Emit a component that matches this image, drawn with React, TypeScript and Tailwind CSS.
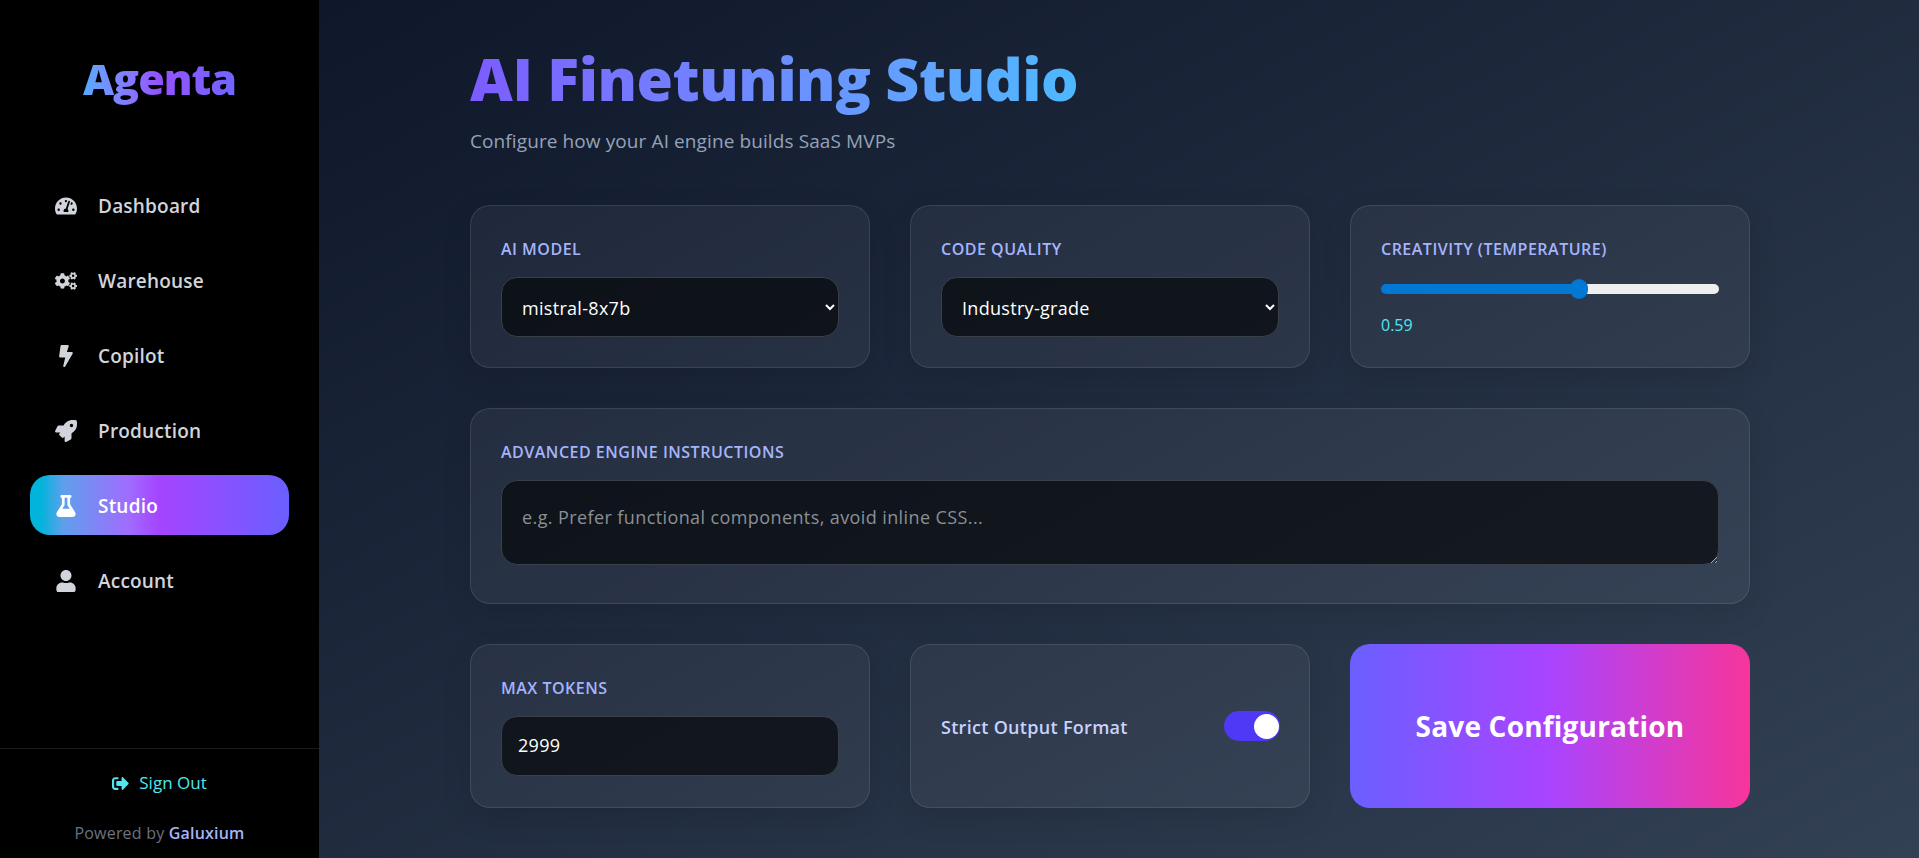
import {
  FaBolt,
  FaCogs,
  FaFlask,
  FaRocket,
  FaSignOutAlt,
  FaTachometerAlt,
  FaUser,
} from 'react-icons/fa';

const navItems = [
  { label: 'Dashboard', icon: FaTachometerAlt },
  { label: 'Warehouse', icon: FaCogs },
  { label: 'Copilot', icon: FaBolt },
  { label: 'Production', icon: FaRocket },
  { label: 'Studio', icon: FaFlask, active: true },
  { label: 'Account', icon: FaUser },
];

const cardClass =
  'rounded-[20px] border border-white/10 bg-white/5 p-[30px] shadow-[0_10px_30px_rgba(0,0,0,0.1)]';
const labelClass =
  'mb-[14px] block text-[16px] leading-[27px] font-semibold tracking-[0.5px] text-[#a5b4fc] uppercase';
const fieldClass =
  'h-[60px] w-full rounded-[16px] border border-[#3b3f48] bg-black/60 px-4 text-[18px] tracking-[0.3px] text-white outline-none';

const App = () => {
  return (
    <div className="flex h-[858px] w-full overflow-hidden font-['Open_Sans',sans-serif] text-white">
      {/* Sidebar */}
      <aside className="flex w-[319px] shrink-0 flex-col bg-black">
        <div className="flex h-[175px] justify-center pt-[48px]">
          <h1 className="h-[62px] bg-gradient-to-r from-[#55aaff] via-[#9450ff] to-[#6f66ff] bg-clip-text text-[43px] leading-[62px] font-black tracking-[-1px] text-transparent">
            Agenta
          </h1>
        </div>
        <nav className="flex flex-1 flex-col gap-[15px] px-[30px]">
          {navItems.map(({ label, icon: Icon, active }) => (
            <a
              key={label}
              className={`flex h-[60px] items-center gap-[21px] rounded-[20px] pt-[2px] pl-[25px] text-[19px] font-semibold tracking-[0.2px] ${
                active
                  ? 'bg-[linear-gradient(90deg,#00b4db_4%,#5f9fec_13%,#a06cff_38%,#a544ff_50%,#6a5fff_100%)] text-white'
                  : 'text-[#d1d5db]'
              }`}
            >
              <Icon className="h-[22px] w-[22px] shrink-0" />
              {label}
            </a>
          ))}
        </nav>
        <div className="flex h-[110px] flex-col items-center border-t border-white/10 pt-[22px]">
          <button className="flex h-[24px] items-center gap-[10px] text-[17px] text-[#4de8f4]">
            <FaSignOutAlt className="h-[17px] w-[17px]" />
            Sign Out
          </button>
          <p className="mt-[26px] text-[16px] leading-[24px] tracking-[0.2px] text-[#6b7280]">
            Powered by <span className="font-semibold text-[#a5b4fc]">Galuxium</span>
          </p>
        </div>
      </aside>

      {/* Main */}
      <main className="flex-1 bg-gradient-to-br from-[#0f172a] to-[#334155] pt-[38px] pl-[151px]">
        <div className="w-[1280px]">
          <h2 className="inline-block bg-gradient-to-r from-[#7c5cff] to-[#4db8ff] bg-clip-text text-[59px] leading-[80px] font-black tracking-[-0.45px] text-transparent">
            AI Finetuning Studio
          </h2>
          <p className="mt-[11px] text-[19px] leading-[24px] tracking-[0.1px] text-[#94a3b8]">
            Configure how your AI engine builds SaaS MVPs
          </p>

          <div className="mt-[52px] grid grid-cols-3 gap-[40px]">
            <div className={`${cardClass} h-[163px]`}>
              <label className={labelClass}>AI Model</label>
              <select className={`${fieldClass} pt-px`} defaultValue="mistral-8x7b">
                <option>mistral-8x7b</option>
                <option>llama-3-70b</option>
              </select>
            </div>
            <div className={`${cardClass} h-[163px]`}>
              <label className={labelClass}>Code Quality</label>
              <select className={`${fieldClass} pt-px`} defaultValue="Industry-grade">
                <option>Industry-grade</option>
                <option>Prototype</option>
              </select>
            </div>
            <div className={`${cardClass} h-[163px]`}>
              <label className={labelClass}>Creativity (Temperature)</label>
              <input
                type="range"
                min={0}
                max={1}
                step={0.01}
                defaultValue={0.59}
                className="block h-[24px] w-full appearance-none bg-transparent [&::-webkit-slider-runnable-track]:h-[10px] [&::-webkit-slider-runnable-track]:rounded-[5px] [&::-webkit-slider-runnable-track]:bg-[linear-gradient(90deg,#0078d4_58.6%,#efefef_58.6%)] [&::-webkit-slider-thumb]:mt-[-5px] [&::-webkit-slider-thumb]:h-[20px] [&::-webkit-slider-thumb]:w-[18px] [&::-webkit-slider-thumb]:appearance-none [&::-webkit-slider-thumb]:rounded-full [&::-webkit-slider-thumb]:bg-[#0078d4]"
              />
              <p className="mt-[14px] text-[16px] leading-[20px] text-[#4de8f4]">0.59</p>
            </div>

            <div className={`${cardClass} col-span-3 h-[196px]`}>
              <label className={labelClass}>Advanced Engine Instructions</label>
              <textarea
                className={`${fieldClass} h-[85px] px-[20px] pt-[24px] leading-[24px] tracking-[0.4px] placeholder:text-[#8b8f96]`}
                placeholder="e.g. Prefer functional components, avoid inline CSS..."
              />
            </div>

            <div className={`${cardClass} h-[164px]`}>
              <label className={labelClass}>Max Tokens</label>
              <input type="number" defaultValue={2999} className={`${fieldClass} pb-[2px] tracking-[-1px]`} />
            </div>
            <div className={`${cardClass} flex h-[164px] items-center justify-between`}>
              <span className="pt-[2px] text-[18px] font-semibold tracking-[0.3px] text-[#c7d2fe]">
                Strict Output Format
              </span>
              <span className="-mr-px flex h-[30px] w-[56px] items-center justify-end rounded-[15px] bg-[#4f39f6] pr-[1px]">
                <span className="h-[25px] w-[25px] rounded-full bg-white" />
              </span>
            </div>
            <button className="h-[164px] rounded-[20px] bg-[linear-gradient(90deg,#6a5fff_0%,#a944ff_50%,#f7359b_100%)] text-[28px] font-bold tracking-[0.2px] text-white">
              Save Configuration
            </button>
          </div>
        </div>
      </main>
    </div>
  );
};

export default App;
